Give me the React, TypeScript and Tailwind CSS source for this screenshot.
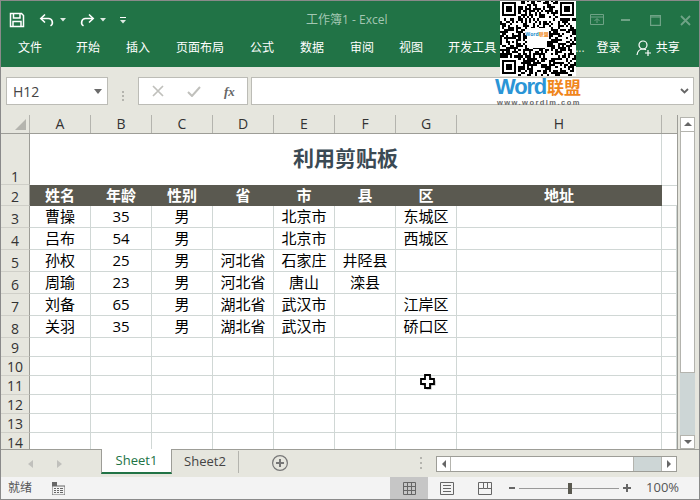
import { ReactNode } from 'react';

const tabs = [
  { label: '文件', className: 'ml-[17px]' },
  { label: '开始', className: 'ml-[34px]' },
  { label: '插入', className: 'ml-[26px]' },
  { label: '页面布局', className: 'ml-[26px]' },
  { label: '公式', className: 'ml-[26px]' },
  { label: '数据', className: 'ml-[26px]' },
  { label: '审阅', className: 'ml-[26px]' },
  { label: '视图', className: 'ml-[25px]' },
  { label: '开发工具', className: 'ml-[25px]' },
];

const columns = ['A', 'B', 'C', 'D', 'E', 'F', 'G', 'H'];
const headers = ['姓名', '年龄', '性别', '省', '市', '县', '区', '地址'];

const people = [
  ['曹操', '35', '男', '', '北京市', '', '东城区'],
  ['吕布', '54', '男', '', '北京市', '', '西城区'],
  ['孙权', '25', '男', '河北省', '石家庄', '井陉县', ''],
  ['周瑜', '23', '男', '河北省', '唐山', '滦县', ''],
  ['刘备', '65', '男', '湖北省', '武汉市', '', '江岸区'],
  ['关羽', '35', '男', '湖北省', '武汉市', '', '硚口区'],
];

// row 14 runs past the bottom of the sheet and gets clipped
const emptyRows = [9, 10, 11, 12, 13, 14];

const colWidths = ['w-[61px]', 'w-[61px]', 'w-[61px]', 'w-[61px]', 'w-[61px]', 'w-[61px]', 'w-[61px]', 'w-[205px]', 'w-[15px]'];

// QR modules, seeded so the picture stays the same on every run
function qrPath() {
  const size = 37;
  const inFinder = (x: number, y: number, ox: number, oy: number) => x >= ox - 1 && x <= ox + 7 && y >= oy - 1 && y <= oy + 7;
  const finderOn = (x: number, y: number, ox: number, oy: number) => {
    const dx = x - ox;
    const dy = y - oy;
    if (dx < 0 || dy < 0 || dx > 6 || dy > 6) return false;
    if (dx === 0 || dy === 0 || dx === 6 || dy === 6) return true;
    return dx >= 2 && dx <= 4 && dy >= 2 && dy <= 4;
  };
  const origins = [[1, 1], [29, 1], [1, 29]];
  let seed = 77291;
  let d = '';
  for (let y = 0; y < size; y++) {
    for (let x = 0; x < size; x++) {
      seed = (seed * 1103515245 + 12345) & 0x7fffffff;
      const random = ((seed >> 16) & 3) < 2;
      const finder = origins.some(([ox, oy]) => inFinder(x, y, ox, oy));
      const on = finder ? origins.some(([ox, oy]) => finderOn(x, y, ox, oy)) : random;
      if (on) d += `M${x} ${y}h1v1h-1z`;
    }
  }
  return d;
}

function QrCode() {
  return (
    <div className="absolute left-[499px] top-[-1px] w-[76px] h-[76px] bg-white">
      <svg width="76" height="76" viewBox="0 0 37 37" shapeRendering="crispEdges">
        <path d={qrPath()} fill="#000" />
      </svg>
      <div className="absolute left-[27px] top-[28px] w-[20px] h-[20px] bg-white flex justify-center pt-[3px] whitespace-nowrap">
        <span className="text-[5px] leading-[7px] font-bold text-[#2a8fd0]">Word<span className="text-[#f08a1d]">联盟</span></span>
      </div>
    </div>
  );
}

function Logo() {
  return (
    <div className="absolute left-[494px] top-[76px] w-[90px] flex flex-col whitespace-nowrap">
      <div className="flex items-baseline h-[20px]">
        <span className="font-['Liberation_Sans',sans-serif] font-bold text-[22px] leading-[20px] text-[#2b95d6] tracking-[-1.2px]">Word</span>
        <span className="font-bold text-[17px] leading-[20px] text-[#f0861c] ml-[1px]">联盟</span>
      </div>
      <span className="font-['Liberation_Sans',sans-serif] font-bold text-[7.5px] leading-[9px] text-[#6b6b6b] tracking-[1.45px] ml-[2px] mt-[1px]">www.wordlm.com</span>
    </div>
  );
}

function SaveIcon() {
  return (
    <svg width="16" height="16" viewBox="0 0 16 16" fill="none" stroke="#fff" strokeWidth="1.5">
      <path d="M1.5 1.5h11l2 2v11h-13z" />
      <path d="M4.5 1.5v4.5h6.5v-4.5" />
      <path d="M4 14.5v-5h8v5" />
    </svg>
  );
}

function Caret({ className }: { className?: string }) {
  return (
    <svg width="6" height="4" viewBox="0 0 6 4" className={className}>
      <path d="M0 0h6l-3 3.5z" fill="#fff" fillOpacity="0.85" />
    </svg>
  );
}

function QuickAccess() {
  return (
    <div className="flex items-center pl-[8px] pt-[7px]">
      <SaveIcon />
      <svg width="16" height="14" viewBox="0 0 16 14" fill="none" stroke="#fff" strokeWidth="1.6" className="ml-[14px]">
        <path d="M6 1.5L1.8 5.5 6 9.5" />
        <path d="M2 5.5h7.5a4 4 0 0 1 2 7.4" />
      </svg>
      <Caret className="ml-[5px]" />
      <svg width="16" height="14" viewBox="0 0 16 14" fill="none" stroke="#fff" strokeWidth="1.6" className="ml-[13px]">
        <path d="M10 1.5L14.2 5.5 10 9.5" />
        <path d="M14 5.5H6.5a4 4 0 0 0-2 7.4" />
      </svg>
      <Caret className="ml-[5px]" />
      <svg width="6" height="7" viewBox="0 0 6 7" className="ml-[14px]">
        <path d="M0 0h6v1H0z" fill="#fff" />
        <path d="M0 3h6l-3 3.5z" fill="#fff" fillOpacity="0.85" />
      </svg>
    </div>
  );
}

function WindowButtons() {
  return (
    <div className="flex items-center ml-auto pt-[7px] pr-[8px] text-[#6fa386]">
      <svg width="14" height="12" viewBox="0 0 14 12" fill="none" stroke="currentColor">
        <path d="M.5.5h13v10H.5z" />
        <path d="M.5 3h13" />
        <path d="M4.5 7L7 4.5 9.5 7M7 5v4" />
      </svg>
      <svg width="9" height="2" viewBox="0 0 9 2" className="ml-[17px]">
        <path d="M0 0h9v2H0z" fill="currentColor" />
      </svg>
      <svg width="11" height="11" viewBox="0 0 11 11" fill="none" stroke="currentColor" strokeWidth="1.2" className="ml-[20px]">
        <path d="M.6.6h9.8v9.8H.6z" />
        <path d="M.6 2h9.8" />
      </svg>
      <svg width="11" height="11" viewBox="0 0 11 11" fill="none" stroke="currentColor" strokeWidth="1.8" className="ml-[19px]">
        <path d="M1 1l9 9M10 1l-9 9" />
      </svg>
    </div>
  );
}

function FormulaBar() {
  return (
    <div className="h-[48px] bg-[#e6e6de] flex pt-[10px] shrink-0">
      <div className="ml-[5px] w-[102px] h-[28px] bg-white border border-[#bcbcb6] flex items-center pl-[6px] pr-[5px] text-[14px] text-[#444]">
        H12
        <svg width="8" height="5" viewBox="0 0 8 5" className="ml-auto">
          <path d="M0 0h8L4 5z" fill="#6b6b6b" />
        </svg>
      </div>
      <div className="w-[30px] flex flex-col items-center justify-center gap-[2px] pb-[1px]">
        <span className="w-[2px] h-[2px] bg-[#b4b4ae]" />
        <span className="w-[2px] h-[2px] bg-[#b4b4ae]" />
        <span className="w-[2px] h-[2px] bg-[#b4b4ae]" />
      </div>
      <div className="w-[110px] h-[28px] bg-white border border-[#bcbcb6] flex items-center">
        <svg width="12" height="12" viewBox="0 0 12 12" fill="none" stroke="#c0c0bc" strokeWidth="1.7" className="ml-[13px]">
          <path d="M1 1l10 10M11 1L1 11" />
        </svg>
        <svg width="14" height="11" viewBox="0 0 14 11" fill="none" stroke="#c0c0bc" strokeWidth="2" className="ml-[23px]">
          <path d="M1 6l4 4 8-9" />
        </svg>
        <span className="ml-[23px] font-['Liberation_Serif',serif] italic font-bold text-[13px] leading-none text-[#666]">fx</span>
      </div>
      <div className="ml-[3px] w-[443px] h-[28px] bg-white border border-[#bcbcb6] flex items-center justify-end pr-[4px]">
        <svg width="9" height="6" viewBox="0 0 9 6" fill="none" stroke="#666" strokeWidth="1.8">
          <path d="M1 1l3.5 3.5L8 1" />
        </svg>
      </div>
    </div>
  );
}

function RowHead({ children, className }: { children: ReactNode; className: string }) {
  return (
    <div className={`w-[29px] shrink-0 bg-[#e6e6de] border-r border-b border-r-[#9d9d97] border-b-[#cfcfc8] flex items-end justify-center text-[14px] text-[#333] ${className}`}>
      {children}
    </div>
  );
}

function Cell({ children, index }: { children?: ReactNode; index: number }) {
  return (
    <div className={`${colWidths[index]} shrink-0 border-r border-b border-[#d0d7d5] flex items-center justify-center text-[15px] text-black whitespace-nowrap pb-[1px]`}>
      {children}
    </div>
  );
}

function Sheet() {
  return (
    <div className="w-[677px] shrink-0 flex flex-col border-r border-[#9d9d97] overflow-hidden">
      <div className="h-[19px] flex shrink-0 border-b border-[#9d9d97] bg-[#e6e6de]">
        <div className="w-[29px] shrink-0 border-r border-[#b4b4ae] flex items-end justify-end pr-[3px] pb-[3px]">
          <svg width="11" height="11" viewBox="0 0 11 11">
            <path d="M11 0v11H0z" fill="#b4b4ae" />
          </svg>
        </div>
        {columns.map((c, i) => (
          <div key={c} className={`${colWidths[i]} shrink-0 border-r border-[#b4b4ae] flex items-center justify-center text-[14px] leading-[18px] text-[#333]`}>
            {c}
          </div>
        ))}
      </div>

      <div className="h-[51px] flex shrink-0">
        <RowHead className="h-[51px] leading-[14px]">1</RowHead>
        <div className="w-[632px] shrink-0 border-r border-[#d0d7d5] flex items-center justify-center pb-[2px] font-bold text-[21px] text-[#3b4a54]">
          利用剪贴板
        </div>
        <div className="w-[15px] shrink-0" />
      </div>

      <div className="h-[21px] flex shrink-0">
        <RowHead className="h-[21px] leading-[17px]">2</RowHead>
        {headers.map((h, i) => (
          <div key={h} className={`${colWidths[i]} shrink-0 bg-[#5a5950] flex items-center justify-center font-bold text-[15px] text-white pr-[1px]`}>
            {h}
          </div>
        ))}
        <div className="w-[15px] shrink-0 border-b border-t border-[#d0d7d5]" />
      </div>

      {people.map((row, r) => (
        <div key={r} className="h-[22px] flex shrink-0">
          <RowHead className="h-[22px] leading-[17px]">{r + 3}</RowHead>
          {row.map((v, i) => (
            <Cell key={i} index={i}>{v}</Cell>
          ))}
          <Cell index={7} />
          <Cell index={8} />
        </div>
      ))}

      {emptyRows.map((n) => (
        <div key={n} className="h-[19px] flex shrink-0">
          <RowHead className="h-[19px] leading-[17px]">{n}</RowHead>
          {colWidths.map((_, i) => (
            <Cell key={i} index={i} />
          ))}
        </div>
      ))}
    </div>
  );
}

function VerticalScroll() {
  return (
    <div className="flex-1 flex flex-col items-center pt-[2px] pr-[2px] bg-[#e6e6de]">
      <div className="w-[15px] h-[15px] bg-white border border-[#b4b4ae] flex items-center justify-center">
        <svg width="8" height="4" viewBox="0 0 8 4">
          <path d="M4 0l4 4H0z" fill="#666" />
        </svg>
      </div>
      <div className="w-[15px] h-[242px] bg-white border-x border-b border-[#b4b4ae]" />
      <div className="w-[15px] h-[62px] bg-[#cdd6d6]" />
      <div className="w-[15px] h-[14px] bg-white border border-[#b4b4ae] flex items-center justify-center">
        <svg width="8" height="4" viewBox="0 0 8 4">
          <path d="M0 0h8L4 4z" fill="#666" />
        </svg>
      </div>
    </div>
  );
}

function SheetTabs() {
  return (
    <div className="h-[28px] shrink-0 bg-[#e6e6de] border-t border-[#9d9d97] flex relative">
      <svg width="5" height="8" viewBox="0 0 5 8" className="ml-[27px] mt-[10px]">
        <path d="M5 0v8L0 4z" fill="#c0c0bc" />
      </svg>
      <svg width="5" height="8" viewBox="0 0 5 8" className="ml-[24px] mt-[10px]">
        <path d="M0 0v8l5-4z" fill="#c0c0bc" />
      </svg>
      <div className="ml-[39px] mt-[-1px] w-[71px] h-[25px] bg-white border-x border-[#9d9d97] border-b-2 border-b-[#217346] flex items-center justify-center text-[13px] text-[#217346]">
        Sheet1
      </div>
      <div className="w-[67px] h-[22px] mt-[1px] border-r border-[#b4b4ae] flex items-center justify-center text-[13px] text-[#444]">
        Sheet2
      </div>
      <svg width="16" height="16" viewBox="0 0 16 16" fill="none" stroke="#777" className="ml-[33px] mt-[5px]">
        <circle cx="8" cy="8" r="7.4" strokeWidth="1.2" />
        <path d="M8 4v8M4 8h8" strokeWidth="2" />
      </svg>
      <div className="ml-[132px] mt-[7px] flex flex-col gap-[3px]">
        <span className="w-[2px] h-[2px] bg-[#b4b4ae]" />
        <span className="w-[2px] h-[2px] bg-[#b4b4ae]" />
        <span className="w-[2px] h-[2px] bg-[#b4b4ae]" />
      </div>
      <div className="ml-[14px] mt-[6px] w-[241px] h-[16px] flex border border-[#9d9d97]">
        <div className="w-[14px] bg-white border-r border-[#b4b4ae] flex items-center justify-center">
          <svg width="4" height="8" viewBox="0 0 4 8">
            <path d="M4 0v8L0 4z" fill="#666" />
          </svg>
        </div>
        <div className="w-[183px] bg-white border-r border-[#b4b4ae]" />
        <div className="w-[27px] bg-[#cdd6d6]" />
        <div className="flex-1 bg-white border-l border-[#b4b4ae] flex items-center justify-center">
          <svg width="4" height="8" viewBox="0 0 4 8">
            <path d="M0 0v8l4-4z" fill="#666" />
          </svg>
        </div>
      </div>
    </div>
  );
}

function StatusBar() {
  return (
    <div className="h-[22px] shrink-0 bg-[#f3f3f3] flex items-center text-[12px] text-[#555]">
      <span className="ml-[7px]">就绪</span>
      <svg width="13" height="13" viewBox="0 0 13 13" className="ml-[20px]">
        <path d="M0 0h5v4H0z" fill="#666" />
        <path d="M0 4h13v9H0z" fill="none" stroke="#666" />
        <path d="M2 6h2v1H2zM5 6h2v1H5zM8 6h3v1H8zM2 8h2v1H2zM5 8h2v1H5zM8 8h3v1H8zM2 10h2v1H2zM5 10h2v1H5zM8 10h3v1H8z" fill="#666" />
      </svg>
      <div className="ml-[325px] w-[38px] h-[22px] bg-[#c6c6c6] flex items-center justify-center">
        <svg width="13" height="13" viewBox="0 0 13 13" fill="none" stroke="#666">
          <path d="M.5.5h12v12H.5zM4.5.5v12M8.5.5v12M.5 4.5h12M.5 8.5h12" />
        </svg>
      </div>
      <svg width="14" height="13" viewBox="0 0 14 13" fill="none" stroke="#666" className="ml-[12px]">
        <path d="M.5.5h13v12H.5z" />
        <path d="M3 3.5h8M3 6.5h8M3 9.5h8" />
      </svg>
      <svg width="14" height="13" viewBox="0 0 14 13" fill="none" stroke="#666" className="ml-[24px]">
        <path d="M.5.5h13v12H.5z" />
        <path d="M5.5.5v6h4v-6M.5 6.5h5M9.5 6.5h4" />
      </svg>
      <span className="ml-[17px] w-[6px] h-[2px] bg-[#666]" />
      <div className="ml-[4px] w-[100px] h-[1px] bg-[#999] relative">
        <span className="absolute left-[49px] top-[-5px] w-[4px] h-[11px] bg-[#5a5950]" />
      </div>
      <svg width="8" height="8" viewBox="0 0 8 8" className="ml-[4px]">
        <path d="M3 0h2v3h3v2H5v3H3V5H0V3h3z" fill="#666" />
      </svg>
      <span className="ml-[15px] text-[13px]">100%</span>
    </div>
  );
}

export default function App() {
  return (
    <div className="relative w-[700px] h-[500px] border border-[#8a8a8a] overflow-hidden flex flex-col bg-[#e6e6de] font-['Open_Sans','Noto_Sans_CJK_SC',sans-serif]">
      <div className="h-[66px] shrink-0 bg-[#217346] flex flex-col">
        <div className="h-[31px] flex relative">
          <QuickAccess />
          <span className="absolute left-[305px] top-[10px] text-[12px] leading-[17px] text-[#a3c7b2]">工作簿1 - Excel</span>
          <WindowButtons />
        </div>
        <div className="h-[35px] flex items-center pb-[3px] text-[12px] text-white">
          {tabs.map((t) => (
            <span key={t.label} className={t.className}>{t.label}</span>
          ))}
          <span className="ml-[79px] text-[#d5e5db]">...</span>
          <span className="ml-[12px]">登录</span>
          <svg width="16" height="17" viewBox="0 0 16 17" fill="none" stroke="#fff" strokeWidth="1.2" className="ml-[15px]">
            <circle cx="7" cy="5" r="4" />
            <path d="M1 15c.5-3.5 2.5-6 6-6 1 0 2 .2 3 .8" />
            <path d="M9 13h6M12 10v6" />
          </svg>
          <span className="ml-[4px]">共享</span>
        </div>
      </div>

      <FormulaBar />

      <div className="flex-1 min-h-0 flex bg-white">
        <Sheet />
        <VerticalScroll />
      </div>

      <SheetTabs />
      <StatusBar />

      <QrCode />
      <Logo />

      <svg width="18" height="18" viewBox="0 0 18 18" className="absolute left-[419px] top-[373px]">
        <path d="M6.5 2.5h5v4h4v5h-4v4h-5v-4h-4v-5h4z" fill="#000" fillOpacity="0.35" />
        <path d="M5 1h5v4h4v5h-4v4H5v-4H1V5h4z" fill="#fff" stroke="#000" strokeWidth="1.8" />
      </svg>
    </div>
  );
}
